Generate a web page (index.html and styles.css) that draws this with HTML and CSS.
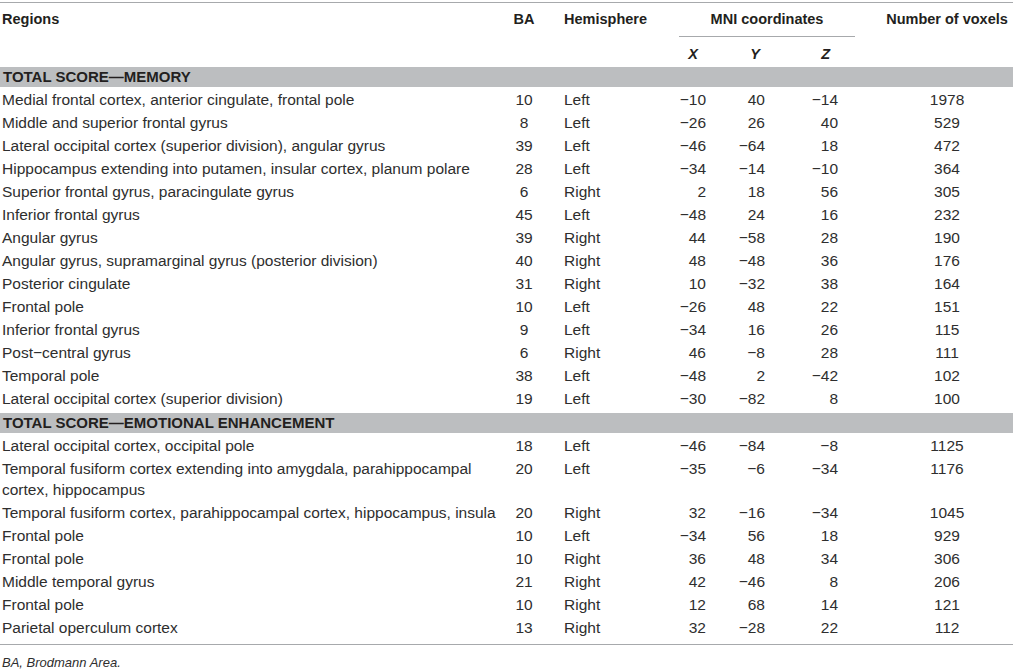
FILE: index.html
```html
<!DOCTYPE html>
<html lang="en">
<head>
  <meta charset="UTF-8" />
  <title>Regions table</title>
  <link rel="stylesheet" href="styles.css">
</head>
<body>

<div class="table-wrap">
  <table class="regions">
    <colgroup>
      <col class="c-region">
      <col class="c-ba">
      <col class="c-hemi">
      <col class="c-x">
      <col class="c-y">
      <col class="c-z">
      <col class="c-vox">
    </colgroup>
    <thead>
      <tr>
        <th rowspan="2" class="region">Regions</th>
        <th rowspan="2" class="ba">BA</th>
        <th rowspan="2" class="hemi">Hemisphere</th>
        <th colspan="3" class="mni">MNI coordinates</th>
        <th rowspan="2" class="vox">Number of voxels</th>
      </tr>
      <tr class="axes">
        <th class="ax-x">X</th>
        <th class="ax-y">Y</th>
        <th class="ax-z">Z</th>
      </tr>
    </thead>
    <tbody>
      <tr class="section"><td colspan="7"><div class="band">TOTAL SCORE—MEMORY</div></td></tr>
      <tr><td class="region">Medial frontal cortex, anterior cingulate, frontal pole</td><td class="ba">10</td><td class="hemi">Left</td><td class="x">−10</td><td class="y">40</td><td class="z">−14</td><td class="vox">1978</td></tr>
      <tr><td class="region">Middle and superior frontal gyrus</td><td class="ba">8</td><td class="hemi">Left</td><td class="x">−26</td><td class="y">26</td><td class="z">40</td><td class="vox">529</td></tr>
      <tr><td class="region">Lateral occipital cortex (superior division), angular gyrus</td><td class="ba">39</td><td class="hemi">Left</td><td class="x">−46</td><td class="y">−64</td><td class="z">18</td><td class="vox">472</td></tr>
      <tr><td class="region">Hippocampus extending into putamen, insular cortex, planum polare</td><td class="ba">28</td><td class="hemi">Left</td><td class="x">−34</td><td class="y">−14</td><td class="z">−10</td><td class="vox">364</td></tr>
      <tr><td class="region">Superior frontal gyrus, paracingulate gyrus</td><td class="ba">6</td><td class="hemi">Right</td><td class="x">2</td><td class="y">18</td><td class="z">56</td><td class="vox">305</td></tr>
      <tr><td class="region">Inferior frontal gyrus</td><td class="ba">45</td><td class="hemi">Left</td><td class="x">−48</td><td class="y">24</td><td class="z">16</td><td class="vox">232</td></tr>
      <tr><td class="region">Angular gyrus</td><td class="ba">39</td><td class="hemi">Right</td><td class="x">44</td><td class="y">−58</td><td class="z">28</td><td class="vox">190</td></tr>
      <tr><td class="region">Angular gyrus, supramarginal gyrus (posterior division)</td><td class="ba">40</td><td class="hemi">Right</td><td class="x">48</td><td class="y">−48</td><td class="z">36</td><td class="vox">176</td></tr>
      <tr><td class="region">Posterior cingulate</td><td class="ba">31</td><td class="hemi">Right</td><td class="x">10</td><td class="y">−32</td><td class="z">38</td><td class="vox">164</td></tr>
      <tr><td class="region">Frontal pole</td><td class="ba">10</td><td class="hemi">Left</td><td class="x">−26</td><td class="y">48</td><td class="z">22</td><td class="vox">151</td></tr>
      <tr><td class="region">Inferior frontal gyrus</td><td class="ba">9</td><td class="hemi">Left</td><td class="x">−34</td><td class="y">16</td><td class="z">26</td><td class="vox">115</td></tr>
      <tr><td class="region">Post−central gyrus</td><td class="ba">6</td><td class="hemi">Right</td><td class="x">46</td><td class="y">−8</td><td class="z">28</td><td class="vox">111</td></tr>
      <tr><td class="region">Temporal pole</td><td class="ba">38</td><td class="hemi">Left</td><td class="x">−48</td><td class="y">2</td><td class="z">−42</td><td class="vox">102</td></tr>
      <tr><td class="region">Lateral occipital cortex (superior division)</td><td class="ba">19</td><td class="hemi">Left</td><td class="x">−30</td><td class="y">−82</td><td class="z">8</td><td class="vox">100</td></tr>
      <tr class="section"><td colspan="7"><div class="band">TOTAL SCORE—EMOTIONAL ENHANCEMENT</div></td></tr>
      <tr><td class="region">Lateral occipital cortex, occipital pole</td><td class="ba">18</td><td class="hemi">Left</td><td class="x">−46</td><td class="y">−84</td><td class="z">−8</td><td class="vox">1125</td></tr>
      <tr><td class="region">Temporal fusiform cortex extending into amygdala, parahippocampal cortex, hippocampus</td><td class="ba">20</td><td class="hemi">Left</td><td class="x">−35</td><td class="y">−6</td><td class="z">−34</td><td class="vox">1176</td></tr>
      <tr><td class="region">Temporal fusiform cortex, parahippocampal cortex, hippocampus, insula</td><td class="ba">20</td><td class="hemi">Right</td><td class="x">32</td><td class="y">−16</td><td class="z">−34</td><td class="vox">1045</td></tr>
      <tr><td class="region">Frontal pole</td><td class="ba">10</td><td class="hemi">Left</td><td class="x">−34</td><td class="y">56</td><td class="z">18</td><td class="vox">929</td></tr>
      <tr><td class="region">Frontal pole</td><td class="ba">10</td><td class="hemi">Right</td><td class="x">36</td><td class="y">48</td><td class="z">34</td><td class="vox">306</td></tr>
      <tr><td class="region">Middle temporal gyrus</td><td class="ba">21</td><td class="hemi">Right</td><td class="x">42</td><td class="y">−46</td><td class="z">8</td><td class="vox">206</td></tr>
      <tr><td class="region">Frontal pole</td><td class="ba">10</td><td class="hemi">Right</td><td class="x">12</td><td class="y">68</td><td class="z">14</td><td class="vox">121</td></tr>
      <tr><td class="region">Parietal operculum cortex</td><td class="ba">13</td><td class="hemi">Right</td><td class="x">32</td><td class="y">−28</td><td class="z">22</td><td class="vox">112</td></tr>
    </tbody>
  </table>
</div>

<p class="note">BA, Brodmann Area.</p>

</body>
</html>
```

FILE: styles.css
```css
* { box-sizing: border-box; }
body {
  margin: 0;
  padding-top: 2px;
  font-family: 'Liberation Sans', Arial, sans-serif;
  color: #2e2e2e;
  background: #fff;
}

.table-wrap {
  border-top: 1px solid #a7a9ac;
  border-bottom: 1px solid #a7a9ac;
  padding-bottom: 4px;
}

.regions {
  width: 1013px;
  table-layout: fixed;
  border-collapse: separate;
  border-spacing: 0;
}

.c-region { width: 512px; }
.c-ba { width: 24px; }
.c-hemi { width: 143px; }
.c-x { width: 33px; }
.c-y { width: 59px; }
.c-z { width: 84px; }
.c-vox { width: 158px; }

/* header */
.regions th {
  font-size: 14.5px;
  font-weight: bold;
  color: #231f20;
  line-height: 17px;
  padding: 8px 0 0;
  vertical-align: top;
  white-space: nowrap;
}

.regions th.region { text-align: left; padding-left: 2px; }
.regions th.ba { text-align: center; }
.regions th.hemi { text-align: left; padding-left: 28px; }
.regions th.vox { text-align: center; padding-left: 26px; }

.regions th.mni {
  text-align: center;
  padding-bottom: 8px;
  border-bottom: 1px solid #a7a9ac;
}

.axes th {
  font-style: italic;
  text-align: right;
  padding: 9px 0 2px;
}
.axes th.ax-x { padding-right: 14px; }
.axes th.ax-y { padding-right: 11px; }
.axes th.ax-z { padding-right: 25px; }

/* section bands */
.section td { padding: 0; }

.band {
  margin: 2px 0 0;
  height: 20px;
  line-height: 20px;
  padding-left: 3px;
  background: #bcbec0;
  font-size: 15px;
  font-weight: bold;
  color: #231f20;
}

/* body rows */
.regions td {
  font-size: 15.5px;
  line-height: 21px;
  padding: 0 0 2px;
  vertical-align: top;
}

.regions td.region { padding-left: 2px; }
.regions td.ba { text-align: center; }
.regions td.hemi { padding-left: 28px; }
.regions td.x, .regions td.y { text-align: right; padding-right: 6px; }
.regions td.z { text-align: right; padding-right: 17px; }
.regions td.vox { text-align: center; padding-left: 26px; }

.note {
  margin: 10px 0 0 2px;
  font-size: 13px;
  line-height: 16px;
  font-style: italic;
  color: #2e2e2e;
}
```
